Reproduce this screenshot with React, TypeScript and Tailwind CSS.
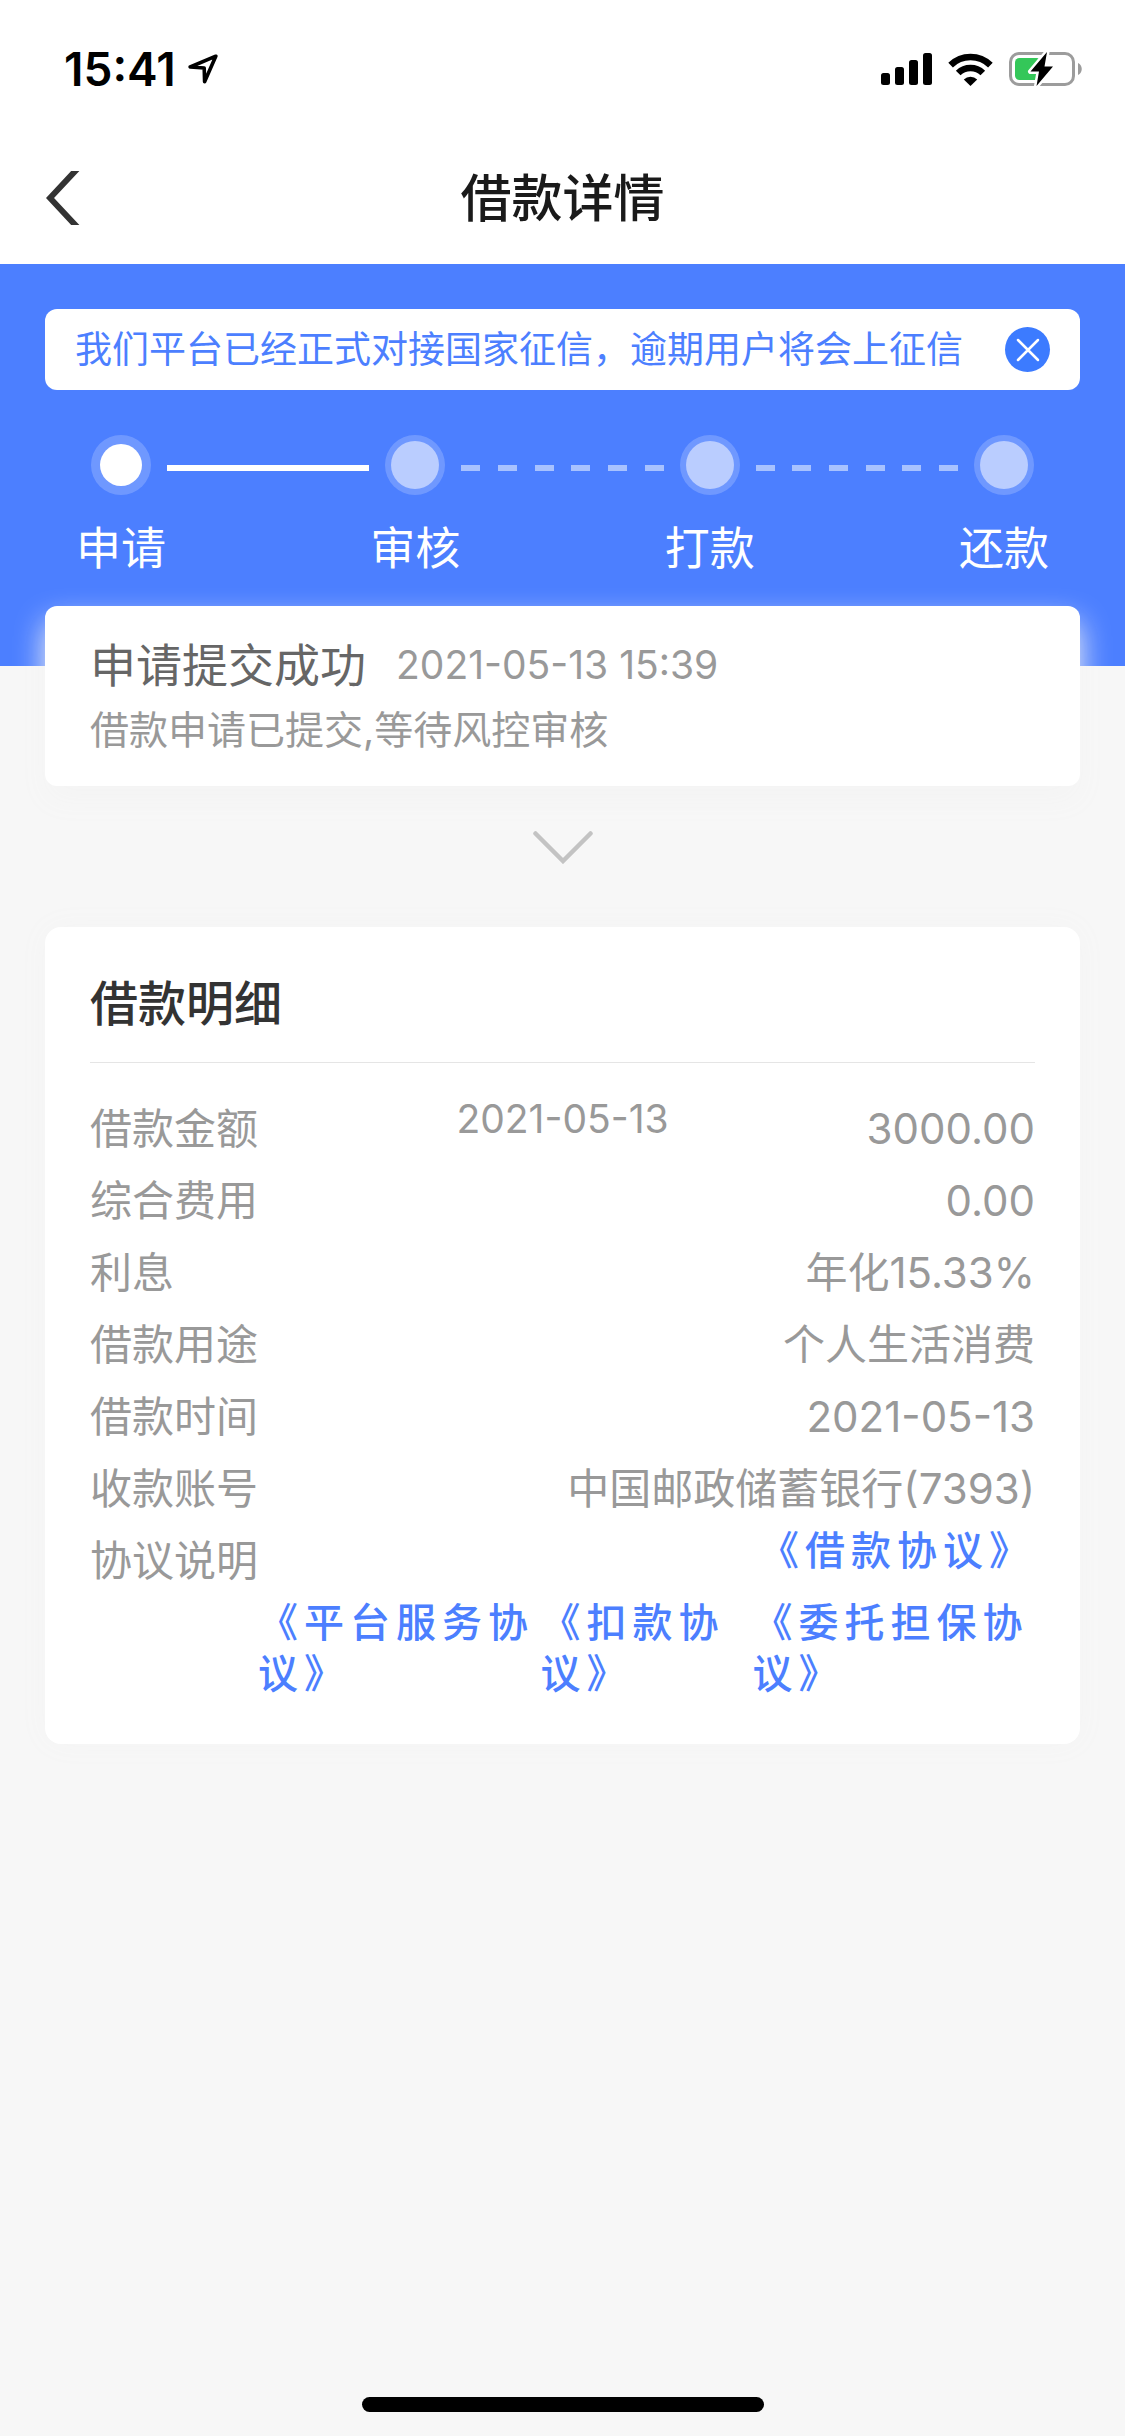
import { useState } from 'react'

const steps = [
    { label: '申请', active: true },
    { label: '审核', active: false },
    { label: '打款', active: false },
    { label: '还款', active: false },
]

const details = [
    { label: '借款金额', note: '2021-05-13', value: '3000.00' },
    { label: '综合费用', value: '0.00' },
    { label: '利息', value: '年化15.33%' },
    { label: '借款用途', value: '个人生活消费' },
    { label: '借款时间', value: '2021-05-13' },
    { label: '收款账号', value: '中国邮政储蓄银行(7393)' },
]

const agreements = ['《平台服务协议》', '《扣款协议》', '《委托担保协议》']

function StatusBar() {
    return (
        <div className="flex h-[132px] items-center justify-between pt-1.5 pr-[42px] pl-16 text-black">
            <div className="flex items-center gap-3">
                <span className="text-[46px] leading-none font-semibold">15:41</span>
                <svg className="h-[30px] w-[30px]" viewBox="0 0 30 30" fill="none" stroke="currentColor" strokeWidth="3.6" strokeLinejoin="round">
                    <path d="M27.8 2.2 L2.2 13 L16.2 14 L16.6 27.8 Z" />
                </svg>
            </div>
            <div className="flex items-center gap-4">
                <svg className="h-8 w-[51px]" viewBox="0 0 51 32" fill="currentColor">
                    <rect x="0" y="20" width="9" height="12" rx="2.5" />
                    <rect x="14" y="14" width="9" height="18" rx="2.5" />
                    <rect x="28" y="7" width="9" height="25" rx="2.5" />
                    <rect x="42" y="0" width="9" height="32" rx="2.5" />
                </svg>
                <svg className="h-[33px] w-[45px]" viewBox="0 0 45 33" fill="none" stroke="currentColor" strokeWidth="6.6">
                    <path d="M2.6 12.1 A28.5 28.5 0 0 1 42.4 12.1" />
                    <path d="M10.2 20 A17.6 17.6 0 0 1 34.8 20" />
                    <path d="M22.5 33 L15.8 26.4 A9.6 9.6 0 0 1 29.2 26.4 Z" fill="currentColor" stroke="none" />
                </svg>
                <svg className="h-9 w-[74px]" viewBox="0 0 74 36" fill="none">
                    <rect x="1.5" y="2.5" width="63" height="31" rx="8.5" stroke="#9c9c9c" strokeWidth="3" />
                    <path d="M69 12 C74 14 74 22 69 24 Z" fill="#9c9c9c" />
                    <rect x="6" y="7" width="26" height="22" rx="4.5" fill="#34c759" />
                    <path d="M38 1 L21.5 20.5 H30 L27.5 35 L44 15.5 H35.5 Z" fill="#000" stroke="#fff" strokeWidth="5" strokeLinejoin="round" paintOrder="stroke" />
                </svg>
            </div>
        </div>
    )
}

function NavBar() {
    return (
        <header className="grid h-[132px] grid-cols-[1fr_auto_1fr] items-center px-[46px]">
            <button type="button" aria-label="返回" className="justify-self-start">
                <svg className="h-[54px] w-[34px]" viewBox="0 0 34 54" fill="none" stroke="#333" strokeWidth="6">
                    <path d="M33 -4 L4 27 L33 58" />
                </svg>
            </button>
            <h1 className="pt-0.5 text-[51px] leading-[60px] font-medium text-[#1a1a1a]">借款详情</h1>
        </header>
    )
}

function Connector({ done }: { done: boolean }) {
    if (done) return <div className="mx-4 mt-[30px] h-1.5 flex-1 bg-white" />
    return (
        <div className="mx-4 mt-[30px] flex flex-1 justify-between">
            {[0, 1, 2, 3, 4, 5].map((i) => (
                <span key={i} className="h-1.5 w-[19px] bg-[#a8c2ff]" />
            ))}
        </div>
    )
}

function Steps() {
    return (
        <div className="mt-[45px] flex px-[46px]">
            {steps.map((step, i) => (
                <div key={step.label} className={i > 0 ? 'flex flex-1' : 'flex'}>
                    {i > 0 && <Connector done={steps[i - 1].active} />}
                    <div className="flex w-[60px] flex-col items-center">
                        <div className="flex h-[60px] w-[60px] items-center justify-center rounded-full bg-white/20">
                            <div className={step.active ? 'h-[42px] w-[42px] rounded-full bg-white' : 'h-12 w-12 rounded-full bg-[#bacdff]'} />
                        </div>
                        <span className="mt-[22px] text-[45px] leading-[64px] whitespace-nowrap text-white">{step.label}</span>
                    </div>
                </div>
            ))}
        </div>
    )
}

export default function App() {
    const [showNotice, setShowNotice] = useState(true)

    return (
        <div lang="zh-CN" className="flex min-h-screen flex-col bg-[#f7f7f7] font-[Inter,'Noto_Sans_CJK_SC',sans-serif]">
            <div className="bg-white">
                <StatusBar />
                <NavBar />
            </div>

            <section className="-mb-[60px] bg-[#4c7fff] px-[45px] pt-[45px] pb-[85px]">
                {showNotice && (
                    <div className="flex h-[81px] items-center justify-between rounded-xl bg-white px-[30px]">
                        <p className="text-[37px] leading-[52px] whitespace-nowrap text-[#4c7fff]">我们平台已经正式对接国家征信，逾期用户将会上征信</p>
                        <button
                            type="button"
                            aria-label="关闭"
                            onClick={() => setShowNotice(false)}
                            className="flex h-[45px] w-[45px] items-center justify-center rounded-full bg-[#3c7bff]"
                        >
                            <svg className="h-6 w-6" viewBox="0 0 24 24" stroke="#fff" strokeWidth="2.5" strokeLinecap="round">
                                <path d="M2 2 L22 22 M22 2 L2 22" />
                            </svg>
                        </button>
                    </div>
                )}
                <Steps />
            </section>

            <main className="px-[45px]">
                <section className="rounded-xl bg-white px-[45px] pt-[27px] pb-[26px] shadow-[0_15px_30px_#f4f4f4]">
                    <div className="flex items-center gap-[30px]">
                        <h2 className="text-[46px] leading-[64px] text-[#666]">申请提交成功</h2>
                        <time className="text-[39px] leading-[60px] text-[#999]">2021-05-13 15:39</time>
                    </div>
                    <p className="mt-[3px] text-[39px] leading-[60px] text-[#999]">借款申请已提交,等待风控审核</p>
                </section>

                <button type="button" aria-label="展开" className="mx-auto mt-[45px] block">
                    <svg className="h-[33px] w-[60px]" viewBox="0 0 60 33" fill="none" stroke="#c3c3c3" strokeWidth="4.5" strokeLinecap="round">
                        <path d="M2.5 2.5 L30 30 L57.5 2.5" />
                    </svg>
                </button>

                <section className="mt-[63px] rounded-2xl bg-white px-[45px] pb-[45px] shadow-[0_0_30px_#f4f4f4]">
                    <h2 className="border-b border-[#e5e5e5] pt-[47px] pb-7 text-[48px] leading-[60px] font-medium text-[#333]">借款明细</h2>
                    <dl className="pt-[30px] text-[42px] leading-[72px] text-[#999]">
                        {details.map((row) => (
                            <div key={row.label} className="flex justify-between">
                                <dt className="flex-1">{row.label}</dt>
                                {row.note && <dd className="text-[39px] leading-[51px]">{row.note}</dd>}
                                <dd className="flex-1 text-right whitespace-nowrap">{row.value}</dd>
                            </div>
                        ))}
                        <div className="flex">
                            <dt className="whitespace-nowrap">协议说明</dt>
                            <dd className="flex-1 text-[40px] leading-[51px] font-medium tracking-[6px] text-[#4c7fff]">
                                <div className="flex h-[72px] justify-end">
                                    <a href="#loan">《借款协议》</a>
                                </div>
                                <div className="flex">
                                    {agreements.map((name) => (
                                        <a key={name} href="#agreement">{name}</a>
                                    ))}
                                </div>
                            </dd>
                        </div>
                    </dl>
                </section>
            </main>

            <div className="mx-auto mt-auto mb-6 h-[15px] w-[402px] rounded-full bg-black" />
        </div>
    )
}
